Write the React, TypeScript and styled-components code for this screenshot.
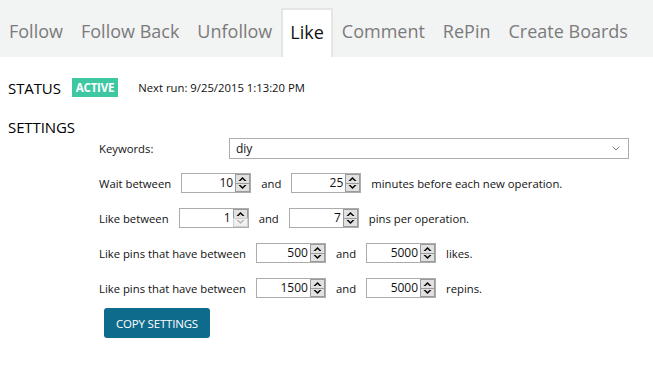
import React, { useState } from 'react';
import styled, { createGlobalStyle } from 'styled-components';

const GlobalStyle = createGlobalStyle`
    html, body {
        margin: 0;
        padding: 0;
        background: #ffffff;
        font-family: "Open Sans", "Noto Sans", sans-serif;
    }
`;

const Page = styled.div`
    width: 653px;
    height: 366px;
    background: #ffffff;
    overflow: hidden;
`;

const TabBar = styled.div`
    display: flex;
    align-items: flex-end;
    height: 57px;
    background: #f2f3f3;
`;

const Tab = styled.button<{ active: boolean }>`
    height: 49px;
    padding: 0 ${p => (p.active ? '7px' : '9px')} 3px;
    margin: 0;
    border: ${p => (p.active ? '2px solid #e4e5e5' : 'none')};
    border-bottom: none;
    background: ${p => (p.active ? '#ffffff' : 'transparent')};
    color: ${p => (p.active ? '#111111' : '#7b7b7b')};
    font-family: inherit;
    font-size: 18px;
    cursor: pointer;
    outline: none;
`;

const StatusRow = styled.div`
    display: flex;
    align-items: center;
    padding-left: 8px;
    margin-top: 21px;
    height: 19px;
`;

const SectionTitle = styled.div`
    font-size: 15px;
    color: #000000;
    letter-spacing: -0.1px;
`;

const Badge = styled.span`
    margin-left: 11px;
    height: 19px;
    line-height: 19px;
    padding: 0 4px;
    background: #3ec8a2;
    color: #ffffff;
    font-weight: 700;
    font-size: 11.5px;
    letter-spacing: -0.2px;
`;

const NextRun = styled.span`
    margin-left: 20px;
    font-size: 11.3px;
    color: #111111;
`;

const SettingsTitle = styled(SectionTitle)`
    padding-left: 8px;
    margin-top: 20px;
`;

const Form = styled.div`
    display: flex;
    flex-direction: column;
    gap: 15px;
    padding-left: 99px;
    margin-top: 1px;
`;

const Row = styled.div`
    display: flex;
    align-items: center;
    gap: 10px;
    height: 20px;
    font-size: 11.3px;
    color: #111111;
`;

const KeywordLabel = styled.span`
    width: 120px;
`;

const Combo = styled.div`
    display: flex;
    align-items: center;
    justify-content: space-between;
    box-sizing: border-box;
    width: 400px;
    height: 21px;
    padding: 0 8px 0 6px;
    border: 1px solid #acacac;
    background: #ffffff;
    font-size: 12px;
`;

const SpinBox = styled.div`
    display: flex;
    box-sizing: border-box;
    width: 70px;
    height: 20px;
    border: 1px solid #acacac;
    background: #ffffff;
`;

const SpinValue = styled.div`
    flex: 1;
    text-align: right;
    padding-right: 2px;
    font-size: 12px;
    line-height: 18px;
`;

const SpinButtons = styled.div`
    display: flex;
    flex-direction: column;
    width: 15px;
`;

const SpinButton = styled.div<{ disabled?: boolean }>`
    flex: 1;
    display: flex;
    align-items: center;
    justify-content: center;
    box-sizing: border-box;
    border: 1px solid ${p => (p.disabled ? '#cfcfcf' : '#9a9a9a')};
    background: ${p => (p.disabled ? '#f0f0f0' : '#e1e1e1')};
    color: ${p => (p.disabled ? '#b5b5b5' : '#000000')};
    & + & {
        margin-top: -1px;
    }
`;

const CopyButton = styled.button`
    align-self: flex-start;
    margin: -5px 0 0 5px;
    width: 106px;
    height: 30px;
    border: none;
    border-radius: 3px;
    background: #0f6b8c;
    color: #ffffff;
    font-family: inherit;
    font-size: 11.5px;
    letter-spacing: -0.2px;
    cursor: pointer;
`;

const Arrow = ({ up }: { up?: boolean }) => (
    <svg width="9" height="6" viewBox="0 0 9 6">
        <path
            d={up ? 'M0.5 5 L4.5 1 L8.5 5 L6.5 5 L4.5 3 L2.5 5 Z' : 'M0.5 1 L4.5 5 L8.5 1 L6.5 1 L4.5 3 L2.5 1 Z'}
            fill="currentColor"
        />
    </svg>
);

const Spinner = ({ value, min }: { value: number; min?: boolean }) => (
    <SpinBox>
        <SpinValue>{value}</SpinValue>
        <SpinButtons>
            <SpinButton><Arrow up /></SpinButton>
            <SpinButton disabled={min}><Arrow /></SpinButton>
        </SpinButtons>
    </SpinBox>
);

const tabs = ['Follow', 'Follow Back', 'Unfollow', 'Like', 'Comment', 'RePin', 'Create Boards'];

const App = () => {
    const [active, setActive] = useState('Like');

    return (
        <Page>
            <GlobalStyle />
            <TabBar>
                {tabs.map(t => (
                    <Tab key={t} active={t === active} onClick={() => setActive(t)}>{t}</Tab>
                ))}
            </TabBar>
            <StatusRow>
                <SectionTitle>STATUS</SectionTitle>
                <Badge>ACTIVE</Badge>
                <NextRun>Next run: 9/25/2015 1:13:20 PM</NextRun>
            </StatusRow>
            <SettingsTitle>SETTINGS</SettingsTitle>
            <Form>
                <Row>
                    <KeywordLabel>Keywords:</KeywordLabel>
                    <Combo>
                        <span>diy</span>
                        <svg width="8" height="5" viewBox="0 0 8 5">
                            <path d="M0.5 0.5 L4 4 L7.5 0.5" stroke="#7a7a7a" strokeWidth="1" fill="none" />
                        </svg>
                    </Combo>
                </Row>
                <Row>
                    <span>Wait between</span>
                    <Spinner value={10} />
                    <span>and</span>
                    <Spinner value={25} />
                    <span>minutes before each new operation.</span>
                </Row>
                <Row>
                    <span>Like between</span>
                    <Spinner value={1} min />
                    <span>and</span>
                    <Spinner value={7} />
                    <span>pins per operation.</span>
                </Row>
                <Row>
                    <span>Like pins that have between</span>
                    <Spinner value={500} />
                    <span>and</span>
                    <Spinner value={5000} />
                    <span>likes.</span>
                </Row>
                <Row>
                    <span>Like pins that have between</span>
                    <Spinner value={1500} />
                    <span>and</span>
                    <Spinner value={5000} />
                    <span>repins.</span>
                </Row>
                <CopyButton>COPY SETTINGS</CopyButton>
            </Form>
        </Page>
    );
};

export default App;
